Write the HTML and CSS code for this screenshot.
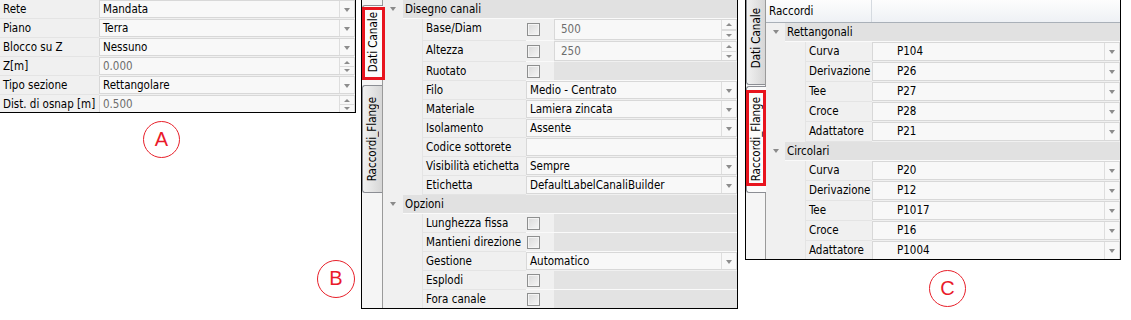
FILE: index.html
```html
<!DOCTYPE html>
<html>
<head lang="it">
    <meta charset="UTF-8">
    <title>Proprietà canale</title>
    <link rel="stylesheet" href="styles.css">
</head>
<body>
<div class="page">
    <!--pannello A-->
    <div class="panel panel-a">
        <div class="row">
            <div class="lbl">Rete</div>
            <div class="val"><span class="txt">Mandata</span><span class="btn drop"></span></div>
        </div>
        <div class="row">
            <div class="lbl">Piano</div>
            <div class="val"><span class="txt">Terra</span><span class="btn drop"></span></div>
        </div>
        <div class="row">
            <div class="lbl">Blocco su Z</div>
            <div class="val"><span class="txt">Nessuno</span><span class="btn drop"></span></div>
        </div>
        <div class="row">
            <div class="lbl">Z[m]</div>
            <div class="val"><span class="txt num">0.000</span><span class="btn spin"><i class="up"></i><i class="down"></i></span></div>
        </div>
        <div class="row">
            <div class="lbl">Tipo sezione</div>
            <div class="val"><span class="txt">Rettangolare</span><span class="btn drop"></span></div>
        </div>
        <div class="row">
            <div class="lbl">Dist. di osnap [m]</div>
            <div class="val"><span class="txt num">0.500</span><span class="btn spin"><i class="up"></i><i class="down"></i></span></div>
        </div>
    </div>

    <!--pannello B-->
    <div class="panel panel-b">
        <div class="tabs">
            <div class="tab active first"><span>Dati Canale</span></div>
            <div class="tab"><span>Raccordi_Flange</span></div>
        </div>
        <div class="grid">
            <div class="cat"><span class="exp"></span><span class="title">Disegno canali</span></div>
            <div class="row h22">
                <div class="ind"></div><div class="lbl">Base/Diam</div>
                <div class="chk-cell"><b class="chk"></b></div>
                <div class="val"><span class="txt num">500</span><span class="btn spin"><i class="up"></i><i class="down"></i></span></div>
            </div>
            <div class="row h21">
                <div class="ind"></div><div class="lbl">Altezza</div>
                <div class="chk-cell"><b class="chk"></b></div>
                <div class="val"><span class="txt num">250</span><span class="btn spin"><i class="up"></i><i class="down"></i></span></div>
            </div>
            <div class="row">
                <div class="ind"></div><div class="lbl">Ruotato</div>
                <div class="chk-cell"><b class="chk"></b></div>
                <div class="rest"></div>
            </div>
            <div class="row">
                <div class="ind"></div><div class="lbl">Filo</div>
                <div class="val"><span class="txt">Medio - Centrato</span><span class="btn drop"></span></div>
            </div>
            <div class="row">
                <div class="ind"></div><div class="lbl">Materiale</div>
                <div class="val"><span class="txt">Lamiera zincata</span><span class="btn drop"></span></div>
            </div>
            <div class="row">
                <div class="ind"></div><div class="lbl">Isolamento</div>
                <div class="val"><span class="txt">Assente</span><span class="btn drop"></span></div>
            </div>
            <div class="row">
                <div class="ind"></div><div class="lbl">Codice sottorete</div>
                <div class="val"><span class="txt"></span></div>
            </div>
            <div class="row">
                <div class="ind"></div><div class="lbl">Visibilità etichetta</div>
                <div class="val"><span class="txt">Sempre</span><span class="btn drop"></span></div>
            </div>
            <div class="row">
                <div class="ind"></div><div class="lbl">Etichetta</div>
                <div class="val"><span class="txt">DefaultLabelCanaliBuilder</span><span class="btn drop"></span></div>
            </div>
            <div class="cat"><span class="exp"></span><span class="title">Opzioni</span></div>
            <div class="row">
                <div class="ind"></div><div class="lbl">Lunghezza fissa</div>
                <div class="chk-cell"><b class="chk"></b></div>
                <div class="rest"></div>
            </div>
            <div class="row">
                <div class="ind"></div><div class="lbl">Mantieni direzione</div>
                <div class="chk-cell"><b class="chk"></b></div>
                <div class="rest"></div>
            </div>
            <div class="row">
                <div class="ind"></div><div class="lbl">Gestione</div>
                <div class="val"><span class="txt">Automatico</span><span class="btn drop"></span></div>
            </div>
            <div class="row">
                <div class="ind"></div><div class="lbl">Esplodi</div>
                <div class="chk-cell"><b class="chk"></b></div>
                <div class="rest"></div>
            </div>
            <div class="row">
                <div class="ind"></div><div class="lbl">Fora canale</div>
                <div class="chk-cell"><b class="chk"></b></div>
                <div class="rest"></div>
            </div>
        </div>
    </div>

    <!--pannello C-->
    <div class="panel panel-c">
        <div class="tabs">
            <div class="tab top"><span>Dati Canale</span></div>
            <div class="tab active"><span>Raccordi_Flange</span></div>
        </div>
        <div class="grid">
            <div class="hdr"><span class="h1">Raccordi</span><span class="h2"></span></div>
            <div class="cat"><span class="exp"></span><span class="title">Rettangonali</span></div>
            <div class="row"><div class="ind"></div><div class="lbl">Curva</div><div class="val"><span class="txt">P104</span><span class="btn drop"></span></div></div>
            <div class="row"><div class="ind"></div><div class="lbl">Derivazione</div><div class="val"><span class="txt">P26</span><span class="btn drop"></span></div></div>
            <div class="row"><div class="ind"></div><div class="lbl">Tee</div><div class="val"><span class="txt">P27</span><span class="btn drop"></span></div></div>
            <div class="row"><div class="ind"></div><div class="lbl">Croce</div><div class="val"><span class="txt">P28</span><span class="btn drop"></span></div></div>
            <div class="row"><div class="ind"></div><div class="lbl">Adattatore</div><div class="val"><span class="txt">P21</span><span class="btn drop"></span></div></div>
            <div class="cat"><span class="exp"></span><span class="title">Circolari</span></div>
            <div class="row"><div class="ind"></div><div class="lbl">Curva</div><div class="val"><span class="txt">P20</span><span class="btn drop"></span></div></div>
            <div class="row"><div class="ind"></div><div class="lbl">Derivazione</div><div class="val"><span class="txt">P12</span><span class="btn drop"></span></div></div>
            <div class="row"><div class="ind"></div><div class="lbl">Tee</div><div class="val"><span class="txt">P1017</span><span class="btn drop"></span></div></div>
            <div class="row"><div class="ind"></div><div class="lbl">Croce</div><div class="val"><span class="txt">P16</span><span class="btn drop"></span></div></div>
            <div class="row"><div class="ind"></div><div class="lbl">Adattatore</div><div class="val"><span class="txt">P1004</span><span class="btn drop"></span></div></div>
        </div>
    </div>

    <!--annotazioni rosse-->
    <div class="mark mark-b"></div>
    <div class="mark mark-c"></div>
    <div class="circle circle-a">A</div>
    <div class="circle circle-b">B</div>
    <div class="circle circle-c">C</div>
</div>
</body>
</html>
```

FILE: styles.css
```css
* {
    margin: 0;
    padding: 0;
    box-sizing: border-box;
}

body {
    background-color: #fff;
    font-family: "DejaVu Sans Condensed", "Liberation Sans", sans-serif;
    font-size: 11.5px;
    color: #000;
}

.page {
    position: relative;
    display: flex;
    align-items: flex-start;
    width: 1131px;
    height: 320px;
}

/* pannelli */
.panel {
    background-color: #f0f0f0;
    border: 1px solid #000;
    border-top: 0;
    overflow: hidden;
}

.panel-a {
    width: 356px;
    height: 113px;
    border-left: 0;
}

.panel-b {
    display: flex;
    width: 377px;
    height: 309px;
    margin-left: 5px;
}

.panel-c {
    display: flex;
    width: 376px;
    height: 260px;
    margin-left: 7px;
}

/* righe */
.row {
    display: flex;
    height: 19px;
}

.row.h22 {
    height: 22px;
}

.row.h21 {
    height: 21px;
}

.panel-c .row {
    height: 20px;
}

.lbl {
    flex: none;
    padding-left: 3px;
    line-height: 18px;
    white-space: nowrap;
    overflow: hidden;
    border-bottom: 1px solid #e4e4e4;
}

.panel-a .lbl {
    width: 99px;
}

.panel-b .lbl {
    width: 104px;
    border-left: 1px solid #e4e4e4;
}

.panel-c .lbl {
    width: 67px;
    line-height: 19px;
    border-left: 1px solid #e4e4e4;
}

.ind {
    flex: none;
    width: 39px;
}

.val {
    flex: 1;
    display: flex;
    height: calc(100% - 1px);
    background-color: #f8f8f8;
    border: 1px solid #d8d8d8;
}

.txt {
    flex: 1;
    padding-left: 3px;
    line-height: 16px;
    white-space: nowrap;
    overflow: hidden;
}

.row.h22 .txt {
    line-height: 19px;
    padding-left: 6px;
}

.row.h21 .txt {
    line-height: 18px;
    padding-left: 6px;
}

.txt.num {
    color: #6d6d6d;
}

.panel-c .txt {
    padding-left: 24px;
    line-height: 17px;
}

/* pulsanti */
.btn {
    flex: none;
    width: 15px;
    border-left: 1px solid #dedede;
    display: flex;
    align-items: center;
    justify-content: center;
}

.drop::after {
    content: "";
    border-left: 3px solid transparent;
    border-right: 3px solid transparent;
    border-top: 4px solid #8c8c8c;
    margin-top: 1px;
}

.spin {
    flex-direction: column;
    justify-content: space-between;
    padding: 3px 0 2px;
    background: linear-gradient(#f8f8f8 48%, #dcdcdc 48%, #dcdcdc 56%, #f8f8f8 56%);
}

.spin i {
    display: block;
    border-left: 3px solid transparent;
    border-right: 3px solid transparent;
}

.spin .up {
    border-bottom: 3px solid #8c8c8c;
}

.spin .down {
    border-top: 3px solid #8c8c8c;
}

/* checkbox */
.chk-cell {
    flex: none;
    width: 28px;
    display: flex;
    align-items: center;
    padding-left: 1px;
    border-bottom: 1px solid #fafafa;
}

.chk {
    display: block;
    width: 13px;
    height: 13px;
    border: 1px solid #8e8f8f;
    background: linear-gradient(135deg, #d9d9d9, #f6f6f6);
    box-shadow: inset 0 0 0 1px #f4f4f4;
}

.rest {
    flex: 1;
    background-color: #e3e3e3;
    border-bottom: 1px solid #fafafa;
}

/* griglia */
.grid {
    flex: 1;
    border-left: 1px solid #9a9a9a;
}

.cat {
    display: flex;
    height: 19px;
}

.exp {
    flex: none;
    width: 20px;
    display: flex;
    align-items: center;
    justify-content: center;
}

.panel-c .exp {
    width: 19px;
}

.exp::after {
    content: "";
    border-left: 3px solid transparent;
    border-right: 3px solid transparent;
    border-top: 4px solid #8a8a8a;
    margin-top: -1px;
}

.cat .title {
    flex: 1;
    padding-left: 2px;
    line-height: 18px;
    background-color: #e1e1e1;
    border-bottom: 1px solid #fafafa;
}

.hdr {
    display: flex;
    height: 23px;
    background: linear-gradient(#fdfdfd, #eef1f5);
    border-bottom: 1px solid #a9b0b8;
}

.hdr .h1 {
    width: 106px;
    padding-left: 3px;
    line-height: 22px;
    border-right: 1px solid #d5dae0;
}

.hdr .h2 {
    flex: 1;
}

/* linguette verticali */
.tabs {
    flex: none;
    width: 20px;
    display: flex;
    flex-direction: column;
    background-color: #f5f5f5;
}

.panel-c .tabs {
    width: 19px;
}

.tab {
    display: flex;
    align-items: center;
    justify-content: center;
    height: 108px;
    margin-top: 5px;
    border: 1px solid #8c8e94;
    border-right: 0;
    border-radius: 3px 0 0 3px;
    background: linear-gradient(90deg, #f1f1f1, #d6d6d6);
}

.tab span {
    writing-mode: vertical-rl;
    transform: rotate(180deg);
    white-space: nowrap;
    padding-left: 1px;
}

.tab.active {
    background: #fbfbfb;
    margin-right: -1px;
    position: relative;
}

.panel-b .tab.first {
    height: 75px;
}

.panel-c .tab.top {
    height: 86px;
    margin-top: -1px;
    border-top: 0;
    border-radius: 0 0 0 3px;
}

.panel-c .tab.top span {
    padding-top: 6px;
}

.panel-c .tab.active {
    height: 107px;
    margin-top: 1px;
}

/* annotazioni */
.mark {
    position: absolute;
    border: 3px solid #e8141e;
}

.mark-b {
    left: 362px;
    top: 7px;
    width: 23px;
    height: 73px;
}

.mark-c {
    left: 746px;
    top: 90px;
    width: 20px;
    height: 96px;
}

.circle {
    position: absolute;
    width: 37px;
    height: 37px;
    border: 1px solid #e8202a;
    border-radius: 50%;
    color: #ea1a2a;
    font-family: "Liberation Sans", sans-serif;
    font-size: 20px;
    line-height: 35px;
    text-align: center;
}

.circle-a {
    left: 143px;
    top: 121px;
}

.circle-b {
    left: 317px;
    top: 260px;
    width: 38px;
    height: 38px;
}

.circle-c {
    left: 929px;
    top: 270px;
}
```
